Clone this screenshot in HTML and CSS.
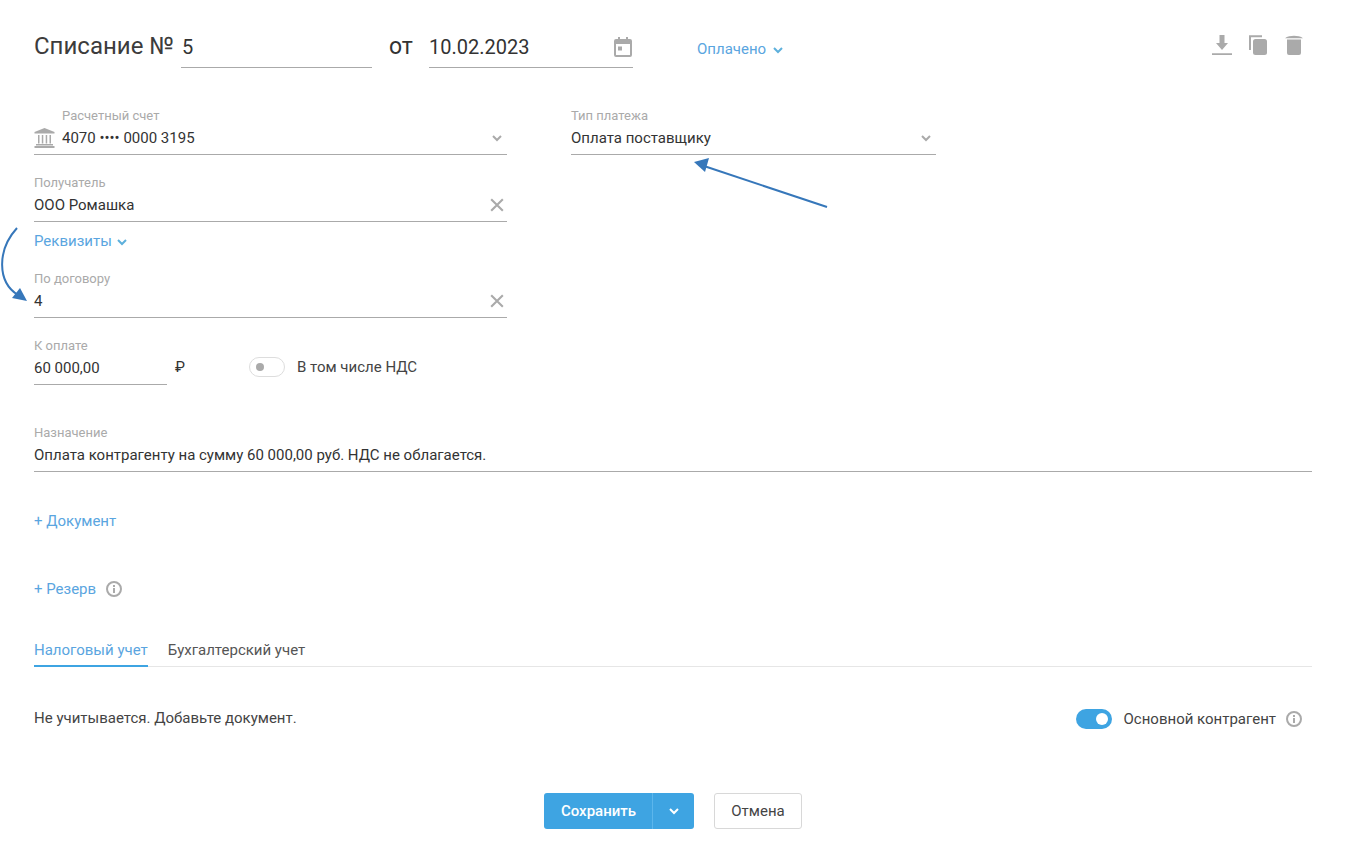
FILE: index.html
```html
<!DOCTYPE html>
<html lang="ru">
<head>
<meta charset="utf-8">
<title>Списание</title>
<link rel="stylesheet" href="styles.css">
</head>
<body>
<main class="page">
  <header class="head">
    <h1 class="title">Списание №</h1>
    <div class="head-input num">5</div>
    <span class="ot">от</span>
    <div class="head-input date">10.02.2023
      <svg class="cal" viewBox="0 0 18 20"><path fill-rule="evenodd" d="M2 2h2V0h2v2h6V0h2v2h2a2 2 0 0 1 2 2v14a2 2 0 0 1-2 2H2a2 2 0 0 1-2-2V4a2 2 0 0 1 2-2zM2 7v11h14V7zM4 9.500h4v4H4z"/></svg>
    </div>
    <a class="link status">Оплачено <svg class="chev" viewBox="0 0 10 7"><path d="M1 1l4 4 4-4"/></svg></a>
    <div class="actions">
      <svg class="act" width="20" height="22" viewBox="0 0 20 22"><path d="M7.500 1h5v8h3.500l-6 7-6-7h3.500zM0 19.300h20V21H0z"/></svg>
      <svg class="act" width="20" height="22" viewBox="0 0 20 22"><path d="M1 1.300h13v2H3V16H1z"/><rect x="5" y="5" width="14" height="16" rx="2.500"/></svg>
      <svg class="act" width="20" height="22" viewBox="0 0 20 22"><path d="M1 4.300C3 2.500 7 1.800 10 1.800s7 .7 9 2.500zM3 5.500h14v13.500a2 2 0 0 1-2 2H5a2 2 0 0 1-2-2z"/></svg>
    </div>
  </header>

  <div class="top-row">
    <div class="field account">
      <svg class="bank" viewBox="0 0 21 20"><path d="M10.500 0L20.500 4v1.500H.5V4zM4 7h1.500v8.500H4zM7.800 7h1.500v8.500H7.800zM11.700 7h1.500v8.500h-1.500zM15.500 7H17v8.500h-1.500zM2 16h17v1.500H2zM.5 18h20v2H.5z"/></svg>
      <label class="lbl">Расчетный счет</label>
      <div class="val">4070 •••• 0000 3195</div>
      <svg class="chev-g" viewBox="0 0 10 7"><path d="M1 1l4 4 4-4"/></svg>
    </div>
    <div class="field pay-type">
      <label class="lbl">Тип платежа</label>
      <div class="val">Оплата поставщику</div>
      <svg class="chev-g" viewBox="0 0 10 7"><path d="M1 1l4 4 4-4"/></svg>
    </div>
  </div>

  <div class="field wide recipient">
    <label class="lbl">Получатель</label>
    <div class="val">ООО Ромашка</div>
    <svg class="clear" viewBox="0 0 12 12"><path d="M1 1l10 10M11 1L1 11"/></svg>
  </div>

  <a class="link details">Реквизиты <svg class="chev" viewBox="0 0 10 7"><path d="M1 1l4 4 4-4"/></svg></a>

  <div class="field wide contract">
    <label class="lbl">По договору</label>
    <div class="val">4</div>
    <svg class="clear" viewBox="0 0 12 12"><path d="M1 1l10 10M11 1L1 11"/></svg>
  </div>

  <div class="sum-row">
    <div class="field sum">
      <label class="lbl">К оплате</label>
      <div class="val">60 000,00</div>
    </div>
    <span class="rub">₽</span>
    <span class="toggle off"><i></i></span>
    <span class="toggle-label">В том числе НДС</span>
  </div>

  <div class="field purpose">
    <label class="lbl">Назначение</label>
    <div class="val">Оплата контрагенту на сумму 60 000,00 руб. НДС не облагается.</div>
  </div>

  <a class="link add doc">+ Документ</a>
  <div class="reserve">
    <a class="link add">+ Резерв</a>
    <svg class="info" viewBox="0 0 16 16"><circle cx="8" cy="8" r="7"/><rect x="7" y="7" width="2" height="5"/><rect x="7" y="4" width="2" height="2"/></svg>
  </div>

  <nav class="tabs">
    <a class="tab active">Налоговый учет</a>
    <a class="tab">Бухгалтерский учет</a>
  </nav>

  <div class="note-row">
    <span class="note">Не учитывается. Добавьте документ.</span>
    <div class="main-contr">
      <span class="toggle on"><i></i></span>
      <span class="toggle-label">Основной контрагент</span>
      <svg class="info" viewBox="0 0 16 16"><circle cx="8" cy="8" r="7"/><rect x="7" y="7" width="2" height="5"/><rect x="7" y="4" width="2" height="2"/></svg>
    </div>
  </div>

  <footer class="foot">
    <div class="save">
      <span class="save-main">Сохранить</span>
      <span class="save-more"><svg viewBox="0 0 10 7"><path d="M1 1l4 4 4-4"/></svg></span>
    </div>
    <button class="cancel">Отмена</button>
  </footer>
</main>

<svg class="arrows" width="1346" height="855" viewBox="0 0 1346 855">
  <path class="arr" d="M827 207L704 166"/>
  <path class="arr-h" d="M694 162L709 158L705 172z"/>
  <path class="arr" d="M17 228C-3 250-3 282 18 295"/>
  <path class="arr-h" d="M27 301L12 298L20 288z"/>
</svg>
</body>
</html>
```
FILE: styles.css
```css
* { box-sizing: border-box; }
html, body { margin: 0; padding: 0; background: #fff; }
body { font-family: Roboto, "Noto Sans", sans-serif; font-size: 15px; color: #333; height: 855px; overflow: hidden; position: relative; }
.page { padding: 0 34px; }
.head { display: flex; align-items: flex-start; height: 68px; padding-top: 28px; }
.title { margin: 0; width: 147px; font-size: 24px; line-height: 36px; font-weight: 400; color: #3c3c3c; white-space: nowrap; }
.head-input { height: 40px; border-bottom: 1px solid #aaa; font-size: 20px; line-height: 38px; color: #333; position: relative; }
.num { width: 191px; padding-left: 1px; }
.ot { width: 57px; padding-left: 17px; font-size: 23px; line-height: 38px; color: #333; }
.date { width: 204px; display: flex; justify-content: space-between; }
.cal { width: 18px; height: 20px; margin: 9px 1px 0 0; fill: #aaa; }
.link { color: #5aa5e0; font-size: 15px; white-space: nowrap; }
.status { margin: 12px 0 0 64px; }
.chev { width: 10px; height: 7px; margin-left: 3px; fill: none; stroke: #5db0dc; stroke-width: 2; }
.actions { margin-left: auto; margin-right: 8px; display: flex; gap: 16px; padding-top: 6px; }
.act { fill: #aaa; display: block; }

.top-row { display: flex; margin-top: 40px; gap: 64px; }
.field { position: relative; height: 47px; border-bottom: 1px solid #aaa; padding-top: 0; }
.lbl { display: block; font-size: 13px; line-height: 16px; color: #aaa; }
.val { font-size: 15px; line-height: 20px; margin-top: 4px; color: #333; white-space: nowrap; }
.account { width: 473px; padding-left: 28px; }
.pay-type { width: 365px; }
.bank { position: absolute; left: 0; top: 20px; width: 21px; height: 20px; fill: #aaa; }
.chev-g { position: absolute; right: 5px; top: 27px; width: 10px; height: 7px; fill: none; stroke: #aaa; stroke-width: 2; }
.clear { position: absolute; right: 3px; top: 23px; width: 14px; height: 14px; fill: none; stroke: #aaa; stroke-width: 1.800; }
.wide { width: 473px; }
.recipient { margin-top: 20px; }
.details { display: block; height: 20px; margin-top: 9px; line-height: 20px; }
.details .chev { margin-left: 1px; }
.contract { margin-top: 20px; }
.sum-row { display: flex; align-items: flex-start; margin-top: 20px; }
.sum { width: 133px; }
.rub { width: 82px; padding: 19px 0 0 8px; font-size: 15px; line-height: 20px; }
.toggle { display: block; position: relative; width: 36px; height: 20px; border-radius: 10px; margin-top: 19px; flex: none; }
.toggle i { position: absolute; top: 6px; width: 8px; height: 8px; border-radius: 50%; }
.toggle.off { border: 1px solid #ddd; background: #fff; }
.toggle.off i { left: 6px; top: 5px; background: #aaa; }
.toggle.on { background: #3ea4e2; margin-top: 0; }
.toggle.on i { right: 4px; top: 4px; width: 12px; height: 12px; background: #fff; }
.toggle-label { margin: 19px 0 0 12px; line-height: 20px; font-size: 15px; color: #444; white-space: nowrap; }
.purpose { margin-top: 40px; }
.add { display: block; line-height: 20px; }
.doc { margin-top: 39px; }
.reserve { display: flex; align-items: center; height: 20px; margin-top: 48px; gap: 10px; }
.info { width: 16px; height: 16px; flex: none; fill: #aaa; }
.info circle { fill: none; stroke: #aaa; stroke-width: 2; }
.tabs { display: flex; height: 39px; margin-top: 29px; padding-top: 11px; border-bottom: 1px solid #e6e6e6; gap: 20px; }
.tab { height: 28px; line-height: 20px; color: #555; white-space: nowrap; padding-top: 1px; }
.tab.active { color: #5aa5e0; border-bottom: 2px solid #3ea4e2; }
.note-row { display: flex; justify-content: space-between; align-items: center; height: 20px; margin-top: 41px; padding-right: 10px; }
.note { color: #444; white-space: nowrap; }
.main-contr { display: flex; align-items: center; margin-top: 2px; }
.main-contr .toggle-label { margin: 0 10px 0 12px; }
.foot { display: flex; justify-content: center; gap: 20px; margin-top: 65px; }
.save { display: flex; width: 150px; height: 36px; background: #3ea4e2; border-radius: 3px; color: #fff; font-weight: 500; line-height: 36px; }
.save-main { width: 109px; padding-left: 1px; text-align: center; border-right: 1px solid #5cb6ec; }
.save-more { flex: 1; display: flex; align-items: center; justify-content: center; }
.save-more svg { width: 10px; height: 7px; fill: none; stroke: #fff; stroke-width: 2; }
.cancel { width: 88px; height: 36px; background: #fff; border: 1px solid #d8d8d8; border-radius: 3px; font: inherit; color: #444; padding: 0; }
.arrows { position: absolute; left: 0; top: 0; pointer-events: none; }
.arr { fill: none; stroke: #3677ba; stroke-width: 2; }
.arr-h { fill: #3677ba; }
```
